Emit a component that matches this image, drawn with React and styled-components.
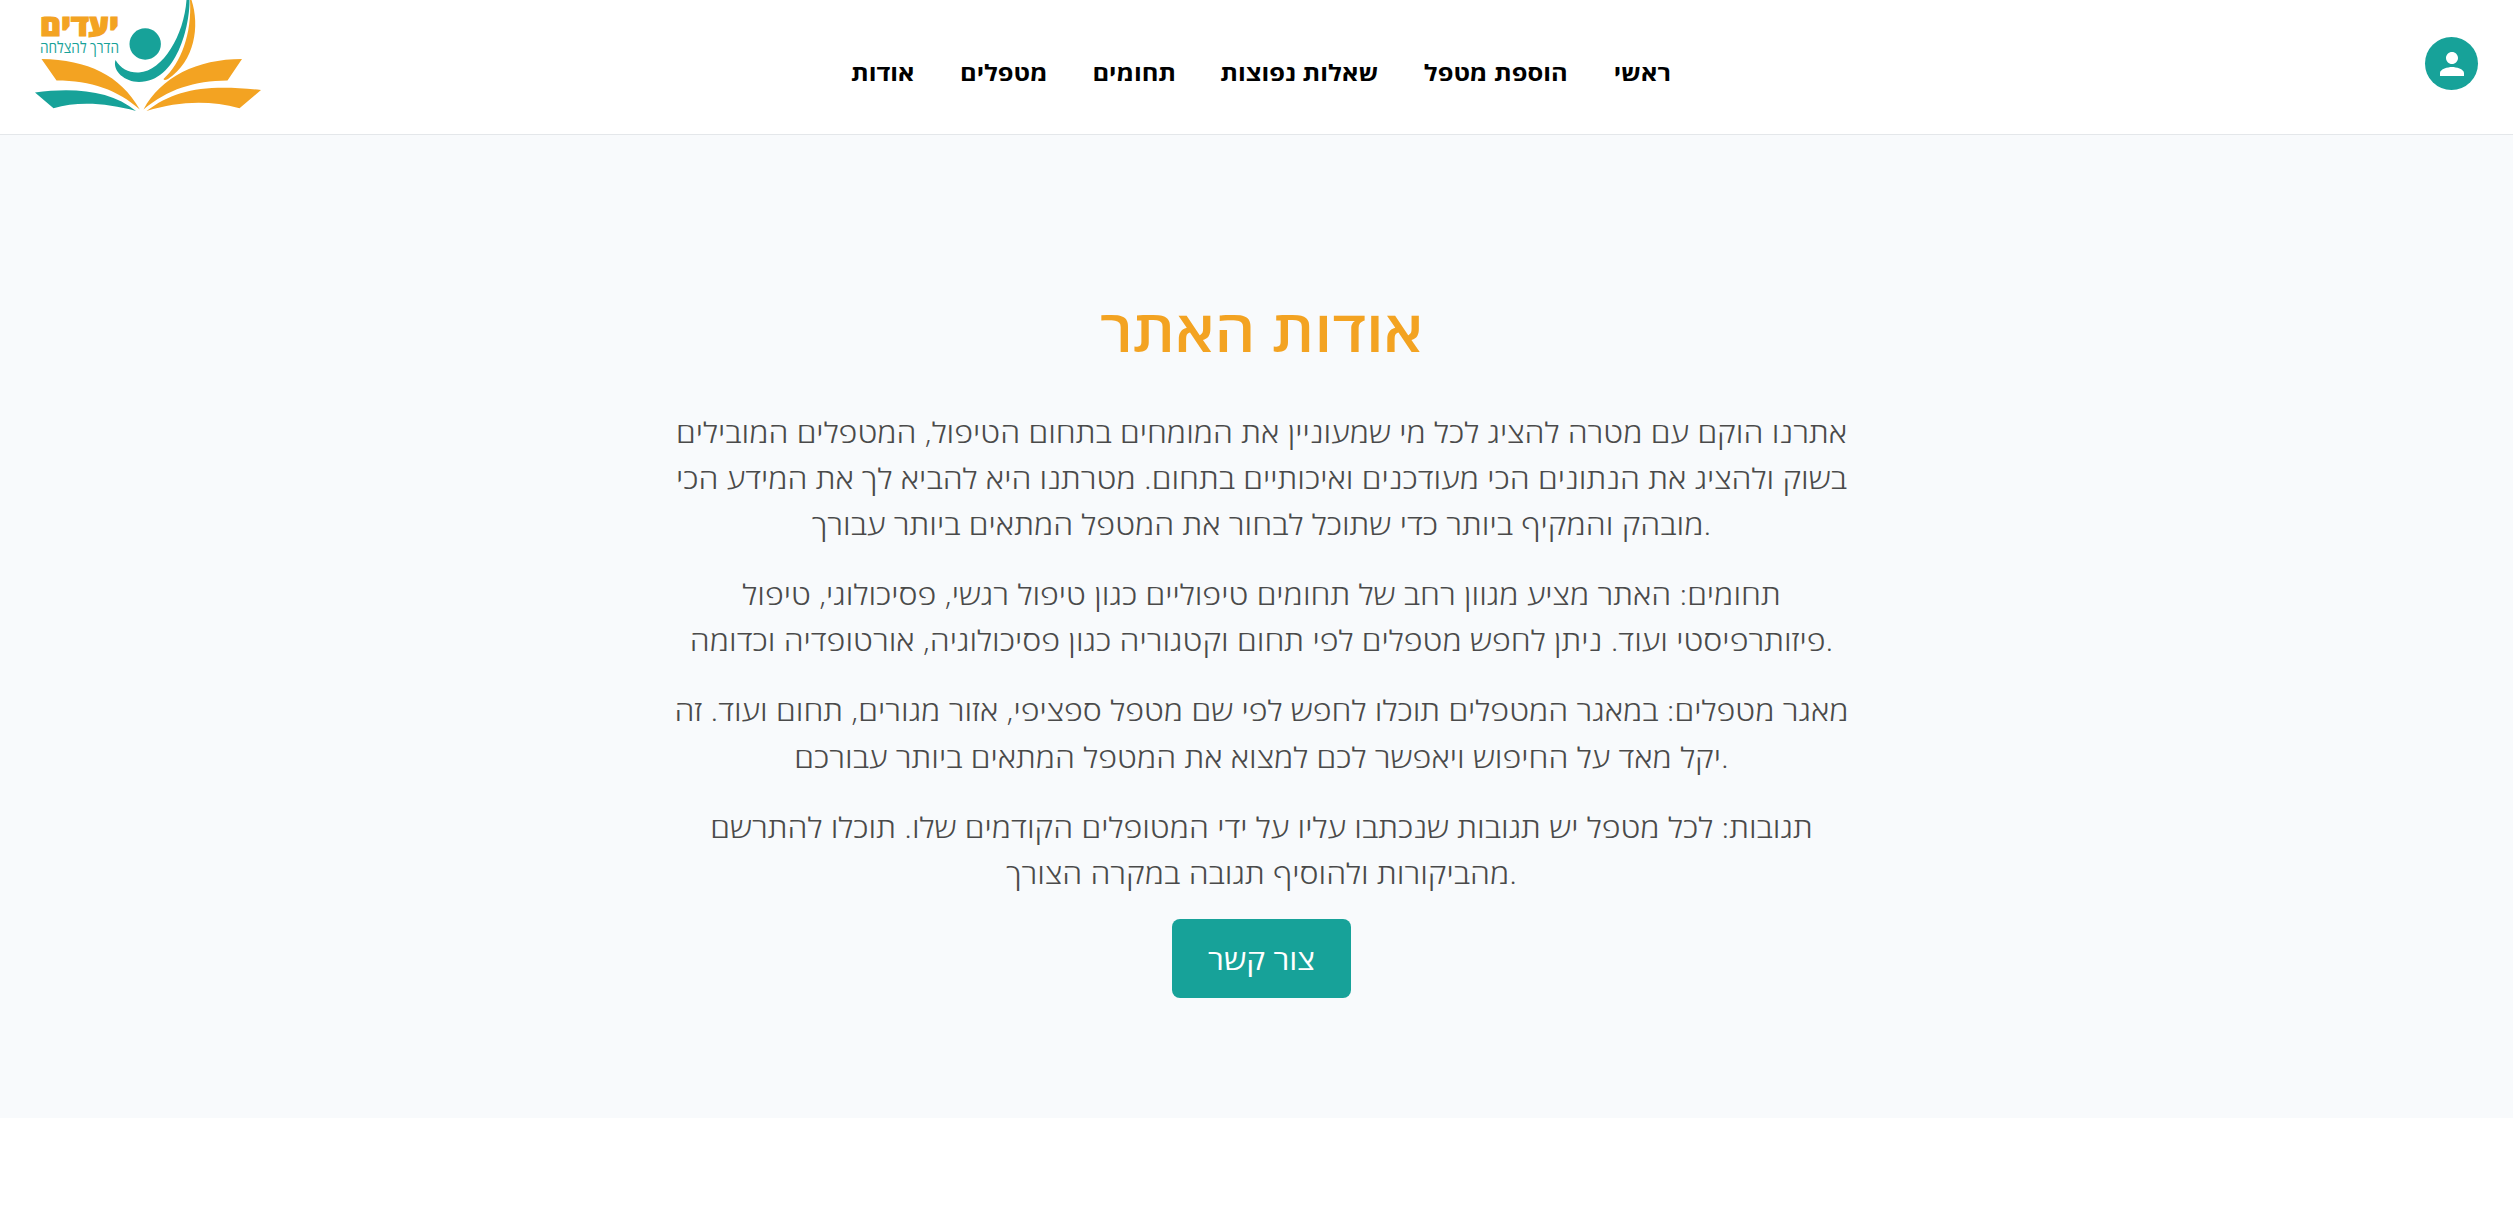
import React from "react";
import styled, { createGlobalStyle } from "styled-components";

const TEAL = "#17a299";
const ORANGE = "#f3a322";

const GlobalStyle = createGlobalStyle`
  *, *::before, *::after { box-sizing: border-box; }
  body { margin: 0; background: #fff; font-family: "Open Sans", "Noto Sans", "DejaVu Sans", sans-serif; overflow: hidden; }
  h1, p { margin: 0; }
`;

const Page = styled.div`
  min-height: 1218px;
`;

const Header = styled.header`
  display: grid;
  grid-template-columns: 1fr auto 1fr;
  height: 135px;
  padding: 0 35px;
  border-bottom: 1px solid #e4e7ea;
`;

const Logo = styled.svg`
  display: block;
  width: 230px;
  height: 120px;
`;

const Nav = styled.nav`
  display: flex;
  flex-direction: row-reverse;
  gap: 46.5px;
  align-items: flex-start;
  padding: 53.7px 0 0 9px;
`;

const NavLink = styled.a`
  width: ${(p) => p.$width}px;
  display: flex;
  justify-content: center;
  white-space: nowrap;
  font-size: 25.4px;
  line-height: 35px;
  font-weight: 700;
  color: #000;
  transform: scaleY(0.88);
  transform-origin: 50% 27.3px;
`;

const Avatar = styled.button`
  justify-self: end;
  margin-top: 37px;
  width: 53px;
  height: 53px;
  padding: 0;
  border: 0;
  border-radius: 50%;
  background: ${TEAL};
  display: grid;
  place-items: center;
`;

const About = styled.main`
  height: 983px;
  padding: 149.3px 0 0 10px;
  background: #f8fafc;
  display: flex;
  flex-direction: column;
  align-items: center;
`;

const Title = styled.h1`
  font-size: 63.7px;
  line-height: 88px;
  font-weight: 600;
  color: ${ORANGE};
  margin-bottom: 35.4px;
  transform: scaleY(0.9);
  transform-origin: 50% 68.7px;
`;

const Paragraph = styled.p`
  display: flex;
  flex-direction: column;
  align-items: center;
  margin-bottom: 24px;
  font-size: 32.1px;
  font-weight: 300;
  line-height: 46.15px;
  color: #4a4a4a;
`;

const Line = styled.span`
  display: block;
  white-space: nowrap;
  transform: scaleY(0.88);
  transform-origin: 50% 35.4px;
`;

const ContactButton = styled.button`
  flex: none;
  width: 179px;
  height: 79px;
  padding: 0 0 1px;
  border: 0;
  border-radius: 8px;
  background: ${TEAL};
  color: #fff;
  font: 400 31.7px/46px "Open Sans", "Noto Sans", sans-serif;
`;

const links = [
  ["ראשי", 56],
  ["הוספת מטפל", 144],
  ["שאלות נפוצות", 156],
  ["תחומים", 81],
  ["מטפלים", 87],
  ["אודות", 62],
];

const paragraphs = [
  [
    "אתרנו הוקם עם מטרה להציג לכל מי שמעוניין את המומחים בתחום הטיפול, המטפלים המובילים",
    "בשוק ולהציג את הנתונים הכי מעודכנים ואיכותיים בתחום. מטרתנו היא להביא לך את המידע הכי",
    "מובהק והמקיף ביותר כדי שתוכל לבחור את המטפל המתאים ביותר עבורך.",
  ],
  [
    "תחומים: האתר מציע מגוון רחב של תחומים טיפוליים כגון טיפול רגשי, פסיכולוגי, טיפול",
    "פיזותרפיסטי ועוד. ניתן לחפש מטפלים לפי תחום וקטגוריה כגון פסיכולוגיה, אורטופדיה וכדומה.",
  ],
  [
    "מאגר מטפלים: במאגר המטפלים תוכלו לחפש לפי שם מטפל ספציפי, אזור מגורים, תחום ועוד. זה",
    "יקל מאד על החיפוש ויאפשר לכם למצוא את המטפל המתאים ביותר עבורכם.",
  ],
  [
    "תגובות: לכל מטפל יש תגובות שנכתבו עליו על ידי המטופלים הקודמים שלו. תוכלו להתרשם",
    "מהביקורות ולהוסיף תגובה במקרה הצורך.",
  ],
];

function BrandLogo() {
  return (
    <Logo viewBox="35 0 230 120">
      <text x="119" y="35.5" direction="rtl" fontSize="30" fontWeight="800" fill={ORANGE} stroke={ORANGE} strokeWidth="1.2" textLength="79" lengthAdjust="spacingAndGlyphs">יעדים</text>
      <text x="119" y="53" direction="rtl" fontSize="16" fontWeight="400" fill={TEAL} textLength="79" lengthAdjust="spacingAndGlyphs">הדרך להצלחה</text>
      <circle cx="145.2" cy="44" r="15.7" fill={TEAL} />
      <path fill={TEAL} d="M186.500 0H189.500C190 25 177 82 139 82C125 82 112 71 115.500 60C121 69 129 73 139 72.500C163 71 184 35 186.500 0Z" />
      <path fill={ORANGE} d="M190 0H191.500C200 26 195 61 168 79Q164 81 163.500 79C181 63 192 34 190 0Z" />
      <path fill={ORANGE} d="M41.500 59C88 60 120 75 139.800 109.500C118 90 91 80.500 56.500 80.500Z" />
      <path fill={TEAL} d="M35 92.500C75 87 112 91 136 111C107 103 78 101 53.500 108.200Z" />
      <path fill={ORANGE} d="M143.500 109.500C161 77 197 59 242 59L227.500 80.500C194 81 168 89 143.500 109.500Z" />
      <path fill={ORANGE} d="M146.500 111C175 89 207 84 261 90L239.500 108.200C209 100 179 101 146.500 111Z" />
    </Logo>
  );
}

export default function App() {
  return (
    <Page>
      <GlobalStyle />
      <Header>
        <BrandLogo />
        <Nav>
          {links.map(([label, width]) => (
            <NavLink key={label} $width={width}>{label}</NavLink>
          ))}
        </Nav>
        <Avatar aria-label="profile">
          <svg width="36" height="36" viewBox="0 0 24 24" fill="#fff">
            <path d="M12 12c2.210 0 4-1.790 4-4s-1.790-4-4-4-4 1.790-4 4 1.790 4 4 4zm0 2c-2.670 0-8 1.340-8 4v2h16v-2c0-2.660-5.330-4-8-4z" />
          </svg>
        </Avatar>
      </Header>
      <About>
        <Title>אודות האתר</Title>
        {paragraphs.map((lines) => (
          <Paragraph key={lines[0]}>
            {lines.map((line) => (
              <Line key={line}>{line}</Line>
            ))}
          </Paragraph>
        ))}
        <ContactButton><Line>צור קשר</Line></ContactButton>
      </About>
    </Page>
  );
}
